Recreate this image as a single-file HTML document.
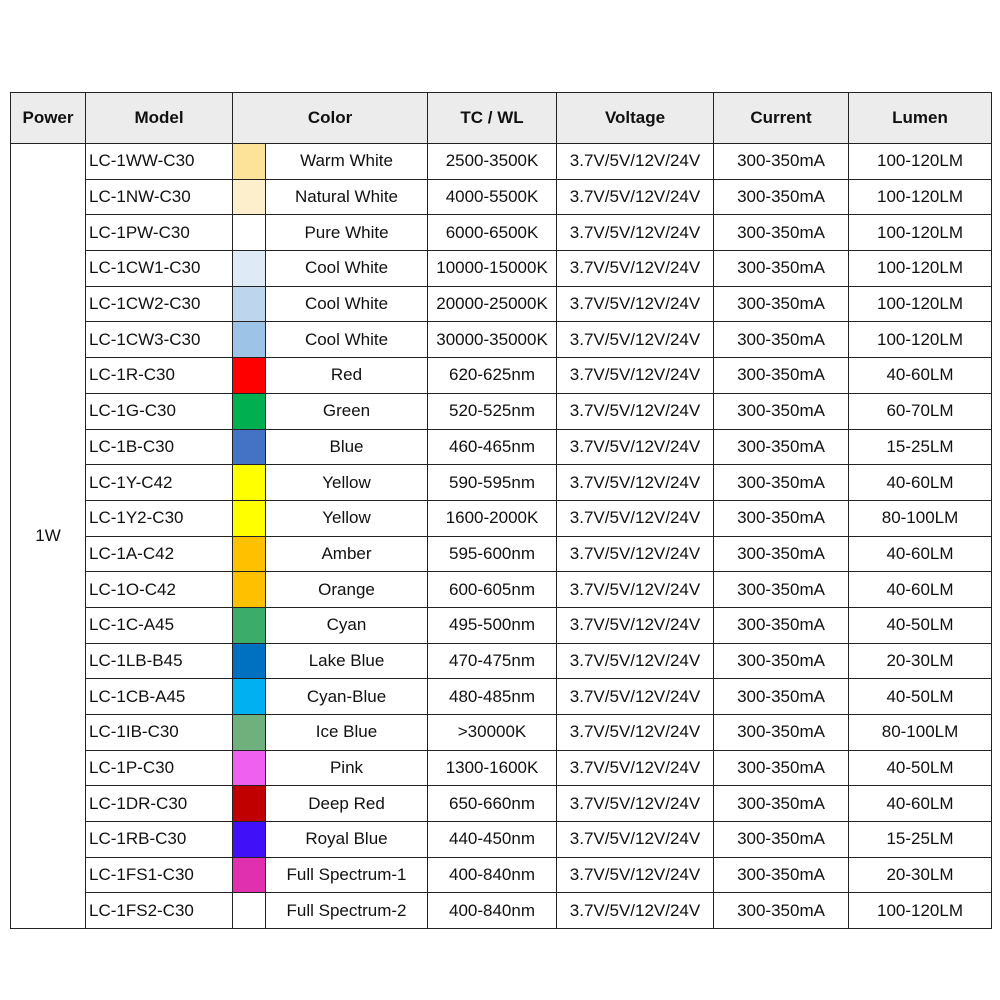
<!DOCTYPE html><html><head><style>
body{margin:0;background:#fff;width:1000px;height:1000px;position:relative;font-family:"Liberation Sans",Arial,sans-serif;}
table{position:absolute;left:10px;top:92px;border-collapse:collapse;table-layout:fixed;width:981px;}
td,th{border:1.3px solid #222;font-size:17px;color:#111;text-align:center;padding:0;height:34.7px;white-space:nowrap;overflow:hidden}
th{background:#ececec;height:50px;font-weight:bold;}
td.m{text-align:left;padding-left:3px}
</style></head><body>
<table>
<colgroup><col style="width:75px"><col style="width:147px"><col style="width:33px"><col style="width:162px"><col style="width:129px"><col style="width:157px"><col style="width:135px"><col style="width:143px"></colgroup>
<tr><th>Power</th><th>Model</th><th colspan="2">Color</th><th>TC / WL</th><th>Voltage</th><th>Current</th><th>Lumen</th></tr>
<tr><td rowspan="22">1W</td><td class="m">LC-1WW-C30</td><td style="background:#fde29a"></td><td>Warm White</td><td>2500-3500K</td><td>3.7V/5V/12V/24V</td><td>300-350mA</td><td>100-120LM</td></tr>
<tr><td class="m">LC-1NW-C30</td><td style="background:#fdefcc"></td><td>Natural White</td><td>4000-5500K</td><td>3.7V/5V/12V/24V</td><td>300-350mA</td><td>100-120LM</td></tr>
<tr><td class="m">LC-1PW-C30</td><td style="background:#fff"></td><td>Pure White</td><td>6000-6500K</td><td>3.7V/5V/12V/24V</td><td>300-350mA</td><td>100-120LM</td></tr>
<tr><td class="m">LC-1CW1-C30</td><td style="background:#deeaf6"></td><td>Cool White</td><td>10000-15000K</td><td>3.7V/5V/12V/24V</td><td>300-350mA</td><td>100-120LM</td></tr>
<tr><td class="m">LC-1CW2-C30</td><td style="background:#bdd6ee"></td><td>Cool White</td><td>20000-25000K</td><td>3.7V/5V/12V/24V</td><td>300-350mA</td><td>100-120LM</td></tr>
<tr><td class="m">LC-1CW3-C30</td><td style="background:#9dc3e6"></td><td>Cool White</td><td>30000-35000K</td><td>3.7V/5V/12V/24V</td><td>300-350mA</td><td>100-120LM</td></tr>
<tr><td class="m">LC-1R-C30</td><td style="background:#ff0000"></td><td>Red</td><td>620-625nm</td><td>3.7V/5V/12V/24V</td><td>300-350mA</td><td>40-60LM</td></tr>
<tr><td class="m">LC-1G-C30</td><td style="background:#00b050"></td><td>Green</td><td>520-525nm</td><td>3.7V/5V/12V/24V</td><td>300-350mA</td><td>60-70LM</td></tr>
<tr><td class="m">LC-1B-C30</td><td style="background:#4472c4"></td><td>Blue</td><td>460-465nm</td><td>3.7V/5V/12V/24V</td><td>300-350mA</td><td>15-25LM</td></tr>
<tr><td class="m">LC-1Y-C42</td><td style="background:#ffff00"></td><td>Yellow</td><td>590-595nm</td><td>3.7V/5V/12V/24V</td><td>300-350mA</td><td>40-60LM</td></tr>
<tr><td class="m">LC-1Y2-C30</td><td style="background:#ffff00"></td><td>Yellow</td><td>1600-2000K</td><td>3.7V/5V/12V/24V</td><td>300-350mA</td><td>80-100LM</td></tr>
<tr><td class="m">LC-1A-C42</td><td style="background:#ffc000"></td><td>Amber</td><td>595-600nm</td><td>3.7V/5V/12V/24V</td><td>300-350mA</td><td>40-60LM</td></tr>
<tr><td class="m">LC-1O-C42</td><td style="background:#ffc000"></td><td>Orange</td><td>600-605nm</td><td>3.7V/5V/12V/24V</td><td>300-350mA</td><td>40-60LM</td></tr>
<tr><td class="m">LC-1C-A45</td><td style="background:#3cac6a"></td><td>Cyan</td><td>495-500nm</td><td>3.7V/5V/12V/24V</td><td>300-350mA</td><td>40-50LM</td></tr>
<tr><td class="m">LC-1LB-B45</td><td style="background:#0070c0"></td><td>Lake Blue</td><td>470-475nm</td><td>3.7V/5V/12V/24V</td><td>300-350mA</td><td>20-30LM</td></tr>
<tr><td class="m">LC-1CB-A45</td><td style="background:#00b0f0"></td><td>Cyan-Blue</td><td>480-485nm</td><td>3.7V/5V/12V/24V</td><td>300-350mA</td><td>40-50LM</td></tr>
<tr><td class="m">LC-1IB-C30</td><td style="background:#70b07c"></td><td>Ice Blue</td><td>&gt;30000K</td><td>3.7V/5V/12V/24V</td><td>300-350mA</td><td>80-100LM</td></tr>
<tr><td class="m">LC-1P-C30</td><td style="background:#f060f0"></td><td>Pink</td><td>1300-1600K</td><td>3.7V/5V/12V/24V</td><td>300-350mA</td><td>40-50LM</td></tr>
<tr><td class="m">LC-1DR-C30</td><td style="background:#c00000"></td><td>Deep Red</td><td>650-660nm</td><td>3.7V/5V/12V/24V</td><td>300-350mA</td><td>40-60LM</td></tr>
<tr><td class="m">LC-1RB-C30</td><td style="background:#4010f8"></td><td>Royal Blue</td><td>440-450nm</td><td>3.7V/5V/12V/24V</td><td>300-350mA</td><td>15-25LM</td></tr>
<tr><td class="m">LC-1FS1-C30</td><td style="background:#e030b0"></td><td>Full Spectrum-1</td><td>400-840nm</td><td>3.7V/5V/12V/24V</td><td>300-350mA</td><td>20-30LM</td></tr>
<tr><td class="m">LC-1FS2-C30</td><td style="background:#fff"></td><td>Full Spectrum-2</td><td>400-840nm</td><td>3.7V/5V/12V/24V</td><td>300-350mA</td><td>100-120LM</td></tr>
</table>
</body></html>
